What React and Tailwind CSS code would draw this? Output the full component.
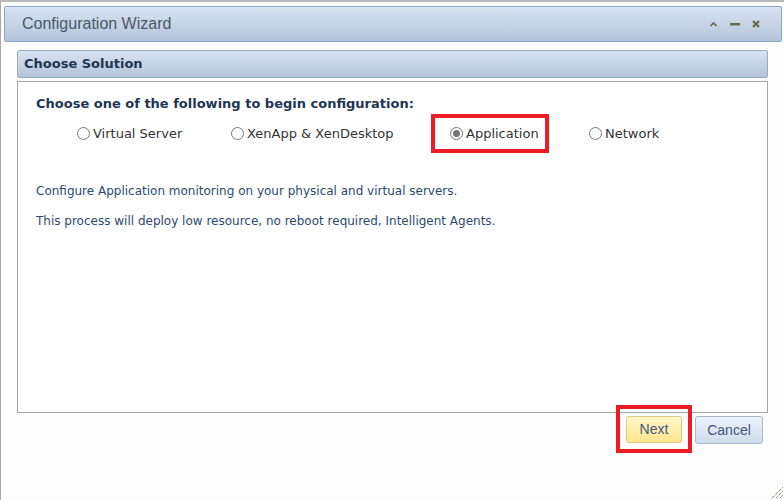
import React from 'react';

function Radio({ checked }) {
  return (
    <span className="w-[13px] h-[13px] rounded-full border border-[#767676] bg-white flex items-center justify-center shrink-0">
      {checked && <span className="w-[7px] h-[7px] rounded-full bg-[#757575]" />}
    </span>
  );
}

function Option({ label, checked, className }) {
  return (
    <label className={`flex items-center gap-[3px] text-[13px] leading-[16px] text-[#333] ${className || ''}`}>
      <Radio checked={checked} />
      <span>{label}</span>
    </label>
  );
}

export default function App() {
  return (
    <div className="w-[784px] h-[500px] bg-[#fdfdfd] border-t-2 border-t-[#b9b9b9] border-l border-l-[#a8a8a8] relative overflow-hidden"
      style={{ fontFamily: '"DejaVu Sans", Verdana, sans-serif' }}>

      {/* Title bar */}
      <div className="ml-[3px] mr-[2px] mt-[4px] h-[36px] rounded-[2px] border border-[#8ea6c6] bg-gradient-to-b from-[#d8e3f2] to-[#b3c4da] flex items-center pl-[17px] pr-[21px]">
        <span className="text-[16px] text-[#4b5868]" style={{ fontFamily: '"Liberation Sans", Arial, sans-serif' }}>
          Configuration Wizard
        </span>
        <div className="ml-auto flex items-center gap-[12px] text-[#6b6a4c]">
          <svg width="9" height="6" viewBox="0 0 9 6">
            <path d="M1.5 5 L4.5 2 L7.5 5" fill="none" stroke="currentColor" strokeWidth="1.6" />
          </svg>
          <svg width="10" height="4" viewBox="0 0 10 4">
            <rect x="0" y="1" width="10" height="2.5" fill="currentColor" />
          </svg>
          <svg width="8" height="8" viewBox="0 0 8 8">
            <path d="M1 1 L7 7 M7 1 L1 7" stroke="currentColor" strokeWidth="2.2" />
          </svg>
        </div>
      </div>

      {/* Body */}
      <div className="ml-[16px] mr-[16px] mt-[8px]">
        <div className="h-[28px] rounded-[2px] border border-[#96abc8] bg-gradient-to-b from-[#d8e3f2] to-[#b3c4da] flex items-center pl-[6px]">
          <span className="text-[13px] font-bold text-[#1f3552]">Choose Solution</span>
        </div>

        <div className="mt-[3px] h-[332px] border border-[#a6a6a6] bg-white pl-[18px] pt-[13px]">
          <div className="text-[13px] leading-[17px] font-bold text-[#1f3552]">
            Choose one of the following to begin configuration:
          </div>

          <div className="mt-[2px] flex items-center h-[39px] pl-[41px]">
            <Option label="Virtual Server" className="w-[154px]" />
            <Option label="XenApp & XenDesktop" className="w-[200px]" />
            <div className="w-[118px] h-[39px] border-[4px] border-[#ed1c24] flex items-center pl-[15px]">
              <Option label="Application" checked />
            </div>
            <Option label="Network" className="ml-[40px]" />
          </div>

          <p className="mt-[30px] text-[12px] leading-[16px] text-[#2d4a6e]">
            Configure Application monitoring on your physical and virtual servers.
          </p>
          <p className="mt-[14px] text-[12px] leading-[16px] text-[#2d4a6e]">
            This process will deploy low resource, no reboot required, Intelligent Agents.
          </p>
        </div>

        {/* Buttons */}
        <div className="mt-[3px] flex justify-end items-start gap-[13px] pr-[5px]" style={{ fontFamily: '"Liberation Sans", Arial, sans-serif' }}>
          <div className="relative">
            <button className="w-[56px] h-[27px] rounded-[3px] border border-[#e4c77a] bg-gradient-to-b from-[#fff7c8] to-[#ffe68e] text-[14px] text-[#3f5a7e]">
              Next
            </button>
            <div className="absolute left-[-10px] top-[-11px] w-[76px] h-[48px] border-[4px] border-[#ed1c24]" />
          </div>
          <button className="w-[68px] h-[28px] rounded-[3px] border border-[#a9bad0] bg-gradient-to-b from-[#eef3fa] to-[#cfdcec] text-[14px] text-[#3f5a7e]">
            Cancel
          </button>
        </div>
      </div>

      {/* Resize grip */}
      <svg className="absolute right-[1px] bottom-[1px]" width="13" height="13" viewBox="0 0 13 13">
        <path d="M12.5 1.5 L1.5 12.5 M12.5 5.5 L5.5 12.5 M12.5 9.5 L9.5 12.5" stroke="#55553f" strokeWidth="1" strokeDasharray="1 1" />
      </svg>
    </div>
  );
}
